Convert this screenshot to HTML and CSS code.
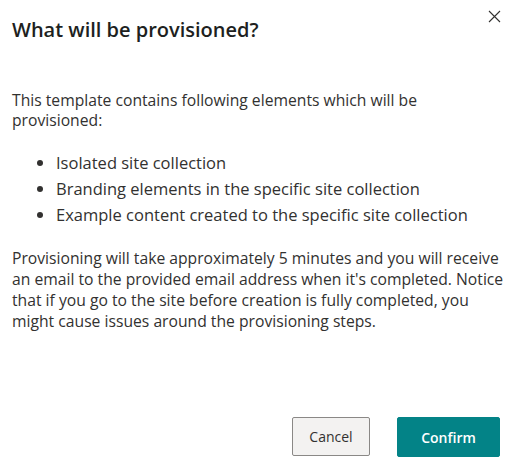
FILE: index.html
```html
<!DOCTYPE html>
<html>
<head>
<meta charset="utf-8">
<link rel="stylesheet" href="styles.css">
</head>
<body>
<div class="dialog">
  <div class="header">
    <h1 class="title">What will be provisioned?</h1>
    <button class="close" aria-label="Close">
      <svg width="13" height="13" viewBox="0 0 13 13"><path d="M1 1 L12 12 M12 1 L1 12" stroke="#323130" stroke-width="1.1" fill="none"/></svg>
    </button>
  </div>
  <div class="content">
    <p class="text text-intro">This template contains following elements which will be provisioned:</p>
    <ul class="list">
      <li>Isolated site collection</li>
      <li>Branding elements in the specific site collection</li>
      <li>Example content created to the specific site collection</li>
    </ul>
    <p class="text">Provisioning will take approximately 5 minutes and you will receive an email to the provided email address when it's completed. Notice that if you go to the site before creation is fully completed, you might cause issues around the provisioning steps.</p>
  </div>
  <div class="footer">
    <button class="btn btn-default">Cancel</button>
    <button class="btn btn-primary">Confirm</button>
  </div>
</div>
</body>
</html>
```
FILE: styles.css
```css
html, body {
  margin: 0;
  padding: 0;
  background: #ffffff;
}
body {
  font-family: "Open Sans", "Noto Sans", sans-serif;
  color: #323130;
  width: 513px;
  height: 467px;
  overflow: hidden;
}
.dialog {
  display: flex;
  flex-direction: column;
  height: 467px;
  box-sizing: border-box;
}
.header {
  display: flex;
  justify-content: space-between;
  align-items: flex-start;
  padding: 16px 12px 0 12px;
}
.title {
  margin: 0;
  font-size: 20px;
  font-weight: 600;
  line-height: 28px;
  color: #201f1e;
}
.close {
  background: none;
  border: none;
  padding: 0;
  margin-top: -6px;
  margin-right: 0;
  width: 13px;
  height: 13px;
  display: flex;
}
.content {
  padding: 0 6px 0 12px;
  margin-top: 46px;
  font-size: 15.7px;
  line-height: 21px;
}
.text {
  margin: 0;
}
.text-intro {
  line-height: 20px;
}
.list {
  margin: 20px 0 20px 0;
  padding-left: 44px;
  font-size: 16.5px;
  line-height: 26px;
}
.footer {
  margin-top: auto;
  display: flex;
  justify-content: flex-end;
  gap: 27px;
  padding: 0 13px 10px 0;
}
.btn {
  font-family: inherit;
  font-size: 14px;
  font-weight: 600;
  height: 40px;
  border-radius: 2px;
}
.btn-default {
  width: 78px;
  height: 39px;
  background: #f3f2f1;
  border: 1px solid #8a8886;
  color: #323130;
  font-weight: 400;
}
.btn-primary {
  width: 103px;
  background: #038387;
  border: 1px solid #038387;
  color: #ffffff;
}
```
